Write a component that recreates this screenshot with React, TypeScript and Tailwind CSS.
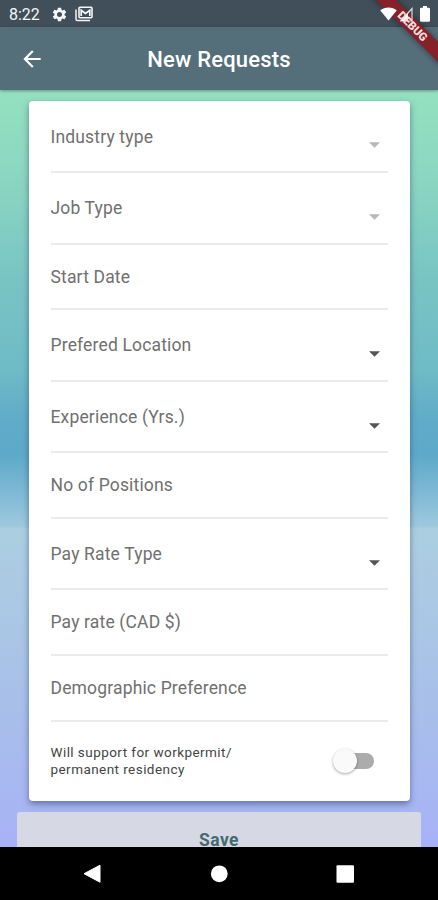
import clsx from "clsx";
import { MdArrowBack, MdSettings } from "react-icons/md";

const fields = [
  { label: "Industry type", height: "h-[72px]", pad: "pt-[2px]", dropdown: true, disabled: true },
  { label: "Job Type", height: "h-[72px]", pad: "pt-px", dropdown: true, disabled: true },
  { label: "Start Date", height: "h-[65px]", pad: "pt-[2px]" },
  { label: "Prefered Location", height: "h-[72px]", pad: "pt-px", dropdown: true },
  { label: "Experience (Yrs.)", height: "h-[71px]", pad: "pt-px", dropdown: true },
  { label: "No of Positions", height: "h-[66px]", pad: "pt-px" },
  { label: "Pay Rate Type", height: "h-[71px]", pad: "pt-px", dropdown: true },
  { label: "Pay rate (CAD $)", height: "h-[66px]", pad: "pt-px" },
  { label: "Demographic Preference", height: "h-[66px]", pad: "pt-px" },
];

function StatusBar() {
  return (
    <div className="flex h-[27px] shrink-0 items-center bg-[#404f59] pl-[9px] pr-[8px] pt-px text-[#f4f6f7]">
      <span className="w-[43px] pt-px text-[16px] leading-none">8:22</span>
      <MdSettings className="-ml-px" size={17} />
      <svg className="ml-[7px]" width="18" height="16" viewBox="0 0 18 16" fill="none" stroke="currentColor">
        <path d="M1 3.5v9.7q0 1.3 1.3 1.3H15" strokeWidth="1.5" />
        <rect x="4" y="1.3" width="13" height="10.5" rx="1" strokeWidth="1.6" />
        <path d="M6.2 10V4.2l4.3 3.2 4.3-3.2V10" strokeWidth="1.7" />
      </svg>
      <div className="relative z-30 ml-auto flex items-center">
        <svg width="17" height="14" viewBox="0 0 17 14" fill="#fff">
          <path d="M8.5 13.6.3 3.5C2.4 1.7 5.3.5 8.5.5s6.1 1.2 8.2 3z" />
        </svg>
        <svg className="ml-[3px]" width="13" height="15" viewBox="0 0 13 15">
          <path d="M.7 14 12 1.5V14z" fill="none" stroke="#ddd" strokeWidth="1.2" />
          <path d="M.5 14 8 6.500V14z" fill="#fff" />
        </svg>
        <svg className="ml-[7px]" width="10" height="16" viewBox="0 0 10 16" fill="#fff">
          <path d="M3 0h4v1.700h1.700Q10 1.700 10 3v11.500q0 1.300-1.300 1.300H1.300Q0 15.800 0 14.500V3q0-1.300 1.300-1.300H3z" />
        </svg>
      </div>
    </div>
  );
}

function AppBar() {
  return (
    <header className="relative z-10 flex h-[63px] shrink-0 items-center bg-[#546e7a] px-[19px] text-white shadow-[0_1px_3px_rgba(0,0,0,0.35)]">
      <MdArrowBack size={26} />
      <h1 className="mr-[26px] flex-1 pt-[2px] text-center text-[22px] font-medium tracking-[0.18px]">New Requests</h1>
    </header>
  );
}

// the ribbon sits under the status icons, its caption above them
function DebugBanner() {
  return (
    <>
      <div className="pointer-events-none absolute right-0 top-0 z-20 size-[80px] overflow-hidden">
        <div className="absolute left-[-6px] top-[19px] h-[14px] w-[120px] rotate-45 bg-[#86212a] shadow-[0_0_6px_rgba(0,0,0,0.45)]" />
      </div>
      <div className="pointer-events-none absolute left-[382px] top-[20px] z-40 flex h-[14px] w-[60px] rotate-45 items-center justify-center text-[11.5px] font-black leading-none text-[#f3dede]">
        DEBUG
      </div>
    </>
  );
}

function Field({ label, height, pad, dropdown, disabled }: (typeof fields)[number]) {
  return (
    <div className={clsx("flex items-center justify-between border-b-2 border-[#ebebeb] text-[#707070]", height)}>
      <span className={clsx("text-[17.5px] leading-5 tracking-[0.16px]", pad)}>{label}</span>
      {dropdown && (
        <svg
          className={clsx("mr-[8px] mt-[19px]", disabled ? "text-[#b8b8b8]" : "text-[#555]")}
          width="11"
          height="6"
          viewBox="0 0 11 6"
          fill="currentColor"
        >
          <path d="M0 .2h11L5.500 5.800z" />
        </svg>
      )}
    </div>
  );
}

function PermitSwitch() {
  return (
    <div className="flex h-[78px] items-center justify-between pr-[14px]">
      <p className="text-[13.5px] leading-[17px] tracking-[0.44px] text-[#444]">
        Will support for workpermit/
        <br />
        permanent residency
      </p>
      <div className="flex h-[16px] w-[38px] items-center rounded-full bg-[#acacac]">
        <div className="-ml-[3px] size-[24px] shrink-0 rounded-full bg-[#fafafa] shadow-[0_1px_3px_rgba(0,0,0,0.35)]" />
      </div>
    </div>
  );
}

function NavBar() {
  return (
    <nav className="h-[53px] shrink-0 bg-black">
      <svg width="438" height="53" viewBox="0 0 438 53" fill="#fff">
        <path d="M84 26.700 100 18.200v17z" stroke="#fff" strokeLinejoin="round" />
        <circle cx="219.300" cy="26.800" r="8.400" />
        <rect x="336.500" y="18.200" width="17.500" height="17.500" rx="1" />
      </svg>
    </nav>
  );
}

export default function App() {
  return (
    <div className="relative flex h-[900px] w-[438px] flex-col overflow-hidden font-['Roboto',sans-serif]">
      <StatusBar />
      <AppBar />
      <DebugBanner />
      <main className="flex min-h-0 flex-1 flex-col overflow-hidden bg-[linear-gradient(180deg,#94e1c0_0px,#8ad5c1_95px,#78c4c3_190px,#6fbbc6_280px,#60abc8_330px,#5da9c9_365px,#78b6d3_395px,#9dc8dd_436px,#abcfe0_439px,#abc9e3_500px,#a8bfea_620px,#a7b2f7_757px)]">
        <section className="ml-[28.5px] mt-[10.5px] h-[700.5px] w-[381.5px] shrink-0 rounded-[4px] bg-white px-[22px] shadow-[0_3px_6px_rgba(30,50,90,0.5)]">
          {fields.map((field) => (
            <Field key={field.label} {...field} />
          ))}
          <PermitSwitch />
        </section>
        <button className="mx-[17px] mt-[11px] h-[54px] shrink-0 rounded-[3px] bg-[#d6d9e3] pt-[3px] text-[17.5px] font-bold tracking-[0.4px] text-[#456b72]">
          Save
        </button>
      </main>
      <NavBar />
    </div>
  );
}
